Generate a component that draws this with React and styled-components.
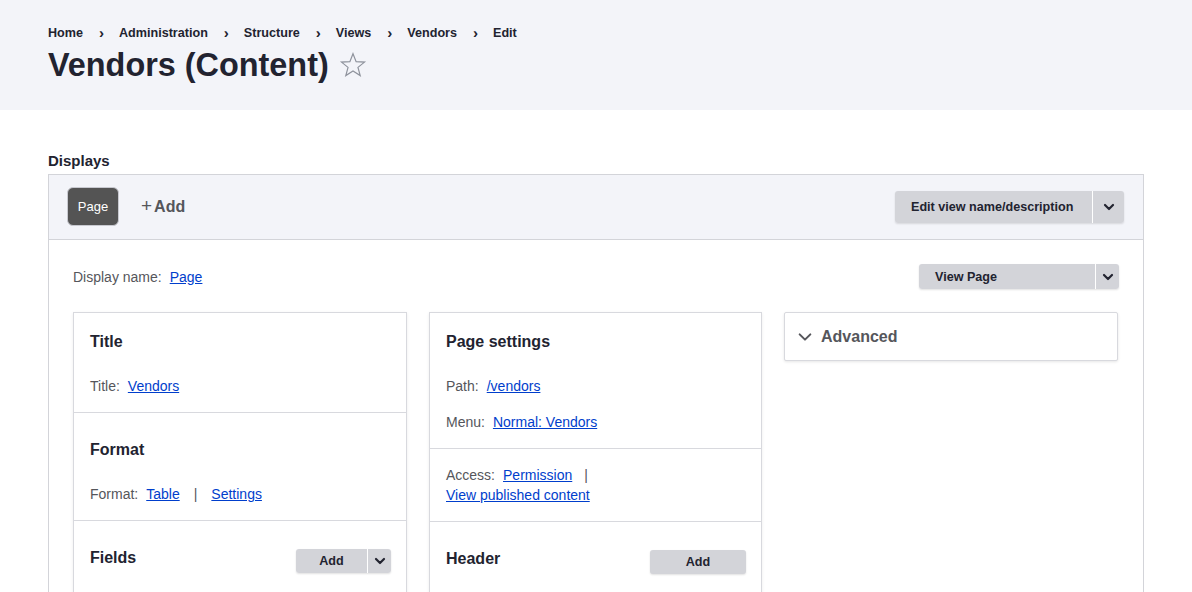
import React from "react";
import styled, { createGlobalStyle } from "styled-components";

const GlobalStyle = createGlobalStyle`
  body {
    margin: 0;
    background: #fff;
    font-family: "Liberation Sans", Arial, sans-serif;
    color: #222330;
  }
  * { box-sizing: border-box; }
`;

const Chevron = ({ size = 12, color = "#222330", width = 2.2 }) => (
  <svg width={size} height={size} viewBox="0 0 12 12" fill="none">
    <path
      d="M2 4l4 4 4-4"
      stroke={color}
      strokeWidth={width}
      strokeLinecap="round"
      strokeLinejoin="round"
    />
  </svg>
);

const Star = () => (
  <svg width="28" height="28" viewBox="0 0 26 26" fill="none">
    <path
      d="M13 2.5l2.9 7.4 7.8.4-6.1 4.9 2.1 7.6L13 18.5l-6.7 4.3 2.1-7.6-6.1-4.9 7.8-.4z"
      stroke="#8e929c"
      strokeWidth="1.1"
      strokeLinejoin="miter"
    />
  </svg>
);

const breadcrumbs = ["Home", "Administration", "Structure", "Views", "Vendors", "Edit"];

const App = () => {
  return (
    <>
      <GlobalStyle />
      <Header>
        <Breadcrumb>
          {breadcrumbs.map((item, i) => (
            <React.Fragment key={item}>
              {i > 0 && <Separator>›</Separator>}
              <span>{item}</span>
            </React.Fragment>
          ))}
        </Breadcrumb>
        <TitleRow>
          <PageTitle>Vendors (Content)</PageTitle>
          <Star />
        </TitleRow>
      </Header>

      <Main>
        <DisplaysLabel>Displays</DisplaysLabel>
        <DisplaysBox>
          <TabBar>
            <Tabs>
              <Tab>Page</Tab>
              <AddTab>
                <span>+</span>Add
              </AddTab>
            </Tabs>
            <SplitButton>
              <ButtonMain size="lg">Edit view name/description</ButtonMain>
              <ButtonToggle size="lg">
                <Chevron />
              </ButtonToggle>
            </SplitButton>
          </TabBar>

          <Content>
            <DisplayRow>
              <Line>
                <Label>Display name:</Label>
                <Link href="#">Page</Link>
              </Line>
              <SplitButton>
                <ButtonMain size="sm">View Page</ButtonMain>
                <ButtonToggle size="sm">
                  <Chevron />
                </ButtonToggle>
              </SplitButton>
            </DisplayRow>

            <Columns>
              <Card>
                <Section>
                  <SectionHead first>
                    <SectionTitle>Title</SectionTitle>
                  </SectionHead>
                  <Line>
                    <Label>Title:</Label>
                    <Link href="#">Vendors</Link>
                  </Line>
                </Section>
                <Section>
                  <SectionHead>
                    <SectionTitle>Format</SectionTitle>
                  </SectionHead>
                  <Line>
                    <Label>Format:</Label>
                    <Link href="#">Table</Link>
                    <Pipe>|</Pipe>
                    <Link href="#">Settings</Link>
                  </Line>
                </Section>
                <Section>
                  <SectionHead>
                    <SectionTitle>Fields</SectionTitle>
                    <SplitButton offset>
                      <ButtonMain size="xs">Add</ButtonMain>
                      <ButtonToggle size="xs">
                        <Chevron />
                      </ButtonToggle>
                    </SplitButton>
                  </SectionHead>
                </Section>
              </Card>

              <Card>
                <Section>
                  <SectionHead first>
                    <SectionTitle>Page settings</SectionTitle>
                  </SectionHead>
                  <Line>
                    <Label>Path:</Label>
                    <Link href="#">/vendors</Link>
                  </Line>
                  <Line>
                    <Label>Menu:</Label>
                    <Link href="#">Normal: Vendors</Link>
                  </Line>
                </Section>
                <Section>
                  <Wrapped>
                    <Label>Access:</Label>
                    <Link href="#">Permission</Link>
                    <WrapPipe>|</WrapPipe>
                    <br />
                    <Link href="#">View published content</Link>
                  </Wrapped>
                </Section>
                <Section>
                  <SectionHead>
                    <SectionTitle>Header</SectionTitle>
                    <SingleButton>Add</SingleButton>
                  </SectionHead>
                </Section>
              </Card>

              <AdvancedCard>
                <Chevron size={16} color="#55565b" width={1.5} />
                <AdvancedTitle>Advanced</AdvancedTitle>
              </AdvancedCard>
            </Columns>
          </Content>
        </DisplaysBox>
      </Main>
    </>
  );
};

export default App;

const Header = styled.header`
  background: #f3f4f9;
  padding: 23px 48px 25px;
  height: 110px;
`;

const Breadcrumb = styled.nav`
  display: flex;
  align-items: center;
  height: 20px;
  font-size: 12.6px;
  font-weight: bold;
  color: #222330;
`;

const Separator = styled.span`
  margin: -2px 15px 0 16px;
  font-size: 15px;
  font-weight: bold;
`;

const TitleRow = styled.div`
  display: flex;
  align-items: center;
  gap: 10px;
  margin-top: 2px;
  height: 40px;
`;

const PageTitle = styled.h1`
  margin: 0;
  font-size: 32.4px;
  line-height: 40px;
  font-weight: bold;
  color: #222330;
`;

const Main = styled.main`
  padding: 42px 48px 0;
`;

const DisplaysLabel = styled.h2`
  margin: 0 0 4px;
  font-size: 15px;
  line-height: 18px;
  font-weight: bold;
  color: #222330;
`;

const DisplaysBox = styled.div`
  border: 1px solid #d3d4d9;
  border-bottom: none;
  background: #fff;
`;

const TabBar = styled.div`
  display: flex;
  align-items: center;
  justify-content: space-between;
  height: 65px;
  padding: 0 19px 0 18px;
  background: #f3f4f9;
  border-bottom: 1px solid #d3d4d9;
`;

const Tabs = styled.div`
  display: flex;
  align-items: center;
  gap: 22px;
`;

const Tab = styled.button`
  height: 39px;
  width: 52px;
  padding: 0;
  margin-top: -1px;
  border: 1px solid #c8c9d0;
  border-radius: 6px;
  background: #545454;
  color: #fff;
  font-family: inherit;
  font-size: 13px;
`;

const AddTab = styled.span`
  display: flex;
  align-items: center;
  font-size: 16px;
  font-weight: bold;
  color: #55565b;

  span {
    font-weight: normal;
    font-size: 19px;
    margin-right: 2px;
    margin-top: -2px;
  }
`;

const SplitButton = styled.div`
  display: flex;
  align-self: ${(p) => (p.offset ? "flex-start" : "auto")};
  margin-top: ${(p) => (p.offset ? "3px" : "0")};
  border-radius: 3px;
  box-shadow: 0 1px 2px rgba(0, 0, 0, 0.12);
`;

const sizes = {
  lg: { h: 32, toggle: 32, w: "197px" },
  sm: { h: 25, toggle: 24, w: "176px" },
  xs: { h: 24, toggle: 24, w: "71px" },
};

const ButtonMain = styled.button`
  height: ${(p) => sizes[p.size].h}px;
  width: ${(p) => sizes[p.size].w};
  padding: 0 16px;
  display: flex;
  align-items: center;
  justify-content: ${(p) => (p.size === "xs" ? "center" : "flex-start")};
  border: none;
  border-radius: 3px 0 0 3px;
  background: #d3d4d9;
  color: #222330;
  font-family: inherit;
  font-size: 12.6px;
  font-weight: bold;
`;

const ButtonToggle = styled.button`
  height: ${(p) => sizes[p.size].h}px;
  width: ${(p) => sizes[p.size].toggle}px;
  padding: 0;
  display: flex;
  align-items: center;
  justify-content: center;
  border: none;
  border-left: 1px solid #fff;
  border-radius: 0 3px 3px 0;
  background: #d3d4d9;
`;

const SingleButton = styled.button`
  align-self: flex-start;
  margin-top: 3px;
  height: 24px;
  width: 96px;
  padding: 0;
  border: none;
  border-radius: 3px;
  background: #d3d4d9;
  box-shadow: 0 1px 2px rgba(0, 0, 0, 0.12);
  color: #222330;
  font-family: inherit;
  font-size: 12.6px;
  font-weight: bold;
`;

const Content = styled.div`
  padding: 24px 24px 0 24px;
`;

const DisplayRow = styled.div`
  display: flex;
  align-items: center;
  justify-content: space-between;
  height: 25px;
  margin-bottom: 23px;
`;

const Line = styled.div`
  display: flex;
  align-items: center;
  gap: 8px;
  font-size: 14px;
  line-height: 20px;

  & + & {
    margin-top: 16px;
  }
`;

const Wrapped = styled.div`
  font-size: 14px;
  line-height: 20px;

  & > * {
    margin-right: 8px;
  }
`;

const Label = styled.span`
  color: #55565b;
`;

const Link = styled.a`
  color: #003ecc;
  text-decoration: underline;
`;

const Pipe = styled.span`
  color: #55565b;
  margin: 0 6px;
`;

const WrapPipe = styled.span`
  color: #55565b;
  margin-left: 4px;
`;

const Columns = styled.div`
  display: grid;
  grid-template-columns: 334px 333px 334px;
  column-gap: 22px;
  align-items: start;
`;

const Card = styled.div`
  border: 1px solid #d8d9de;
  border-bottom: none;
  background: #fff;
  box-shadow: 0 1px 3px rgba(0, 0, 0, 0.08);
`;

const Section = styled.div`
  padding: 16px 15px 16px 16px;

  & + & {
    border-top: 1px solid #d8d9de;
  }
`;

const SectionHead = styled.div`
  display: flex;
  justify-content: space-between;
  height: 24px;
  margin-top: ${(p) => (p.first ? "1px" : "9px")};
  margin-bottom: 22px;
`;

const SectionTitle = styled.h3`
  margin: 0;
  font-size: 16px;
  line-height: 24px;
  font-weight: bold;
  color: #222330;
`;

const AdvancedCard = styled.div`
  display: flex;
  align-items: center;
  gap: 8px;
  height: 49px;
  padding: 0 12px;
  border: 1px solid #d8d9de;
  border-radius: 2px;
  background: #fff;
  box-shadow: 0 1px 3px rgba(0, 0, 0, 0.1);
`;

const AdvancedTitle = styled.span`
  font-size: 16px;
  font-weight: bold;
  color: #55565b;
`;
